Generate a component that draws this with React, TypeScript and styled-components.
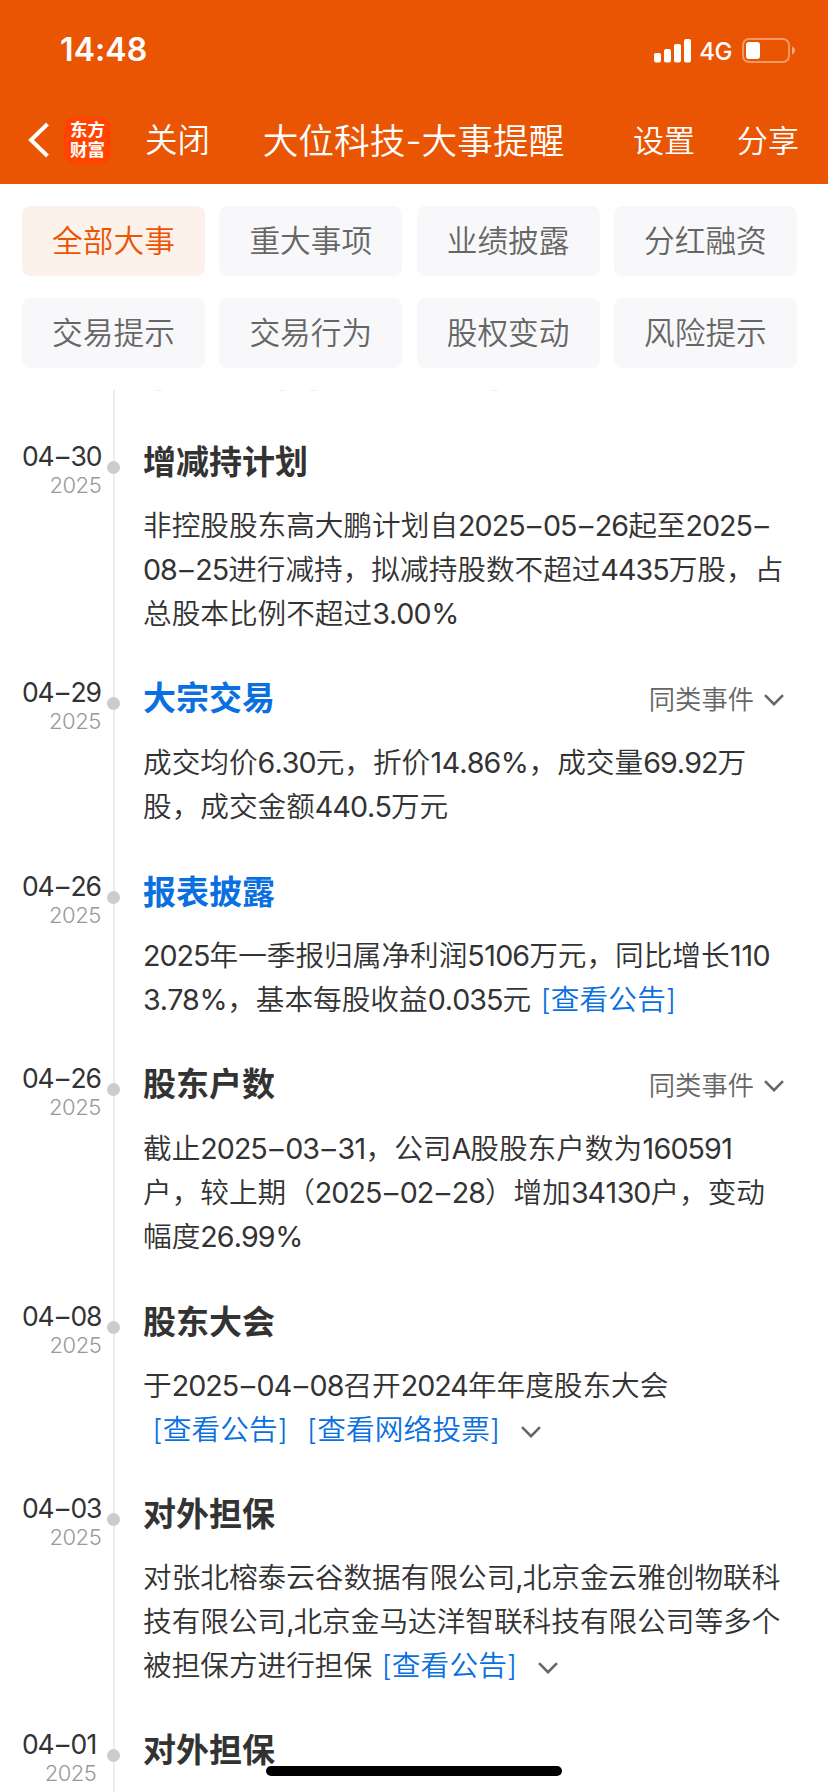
import React from "react";
import styled, { createGlobalStyle } from "styled-components";

const GlobalStyle = createGlobalStyle`
  *, *::before, *::after { box-sizing: border-box; }
  body {
    margin: 0;
    background: #fff;
    color: #333;
    font-family: Inter, "Noto Sans CJK SC", sans-serif;
    font-weight: 350;
    overflow: hidden;
  }
`;

const Screen = styled.div`
  width: 828px;
  height: 1792px;
  display: flex;
  flex-direction: column;
  background: #fff;
  overflow: hidden;
  position: relative;
`;

const Header = styled.header`
  height: 184px;
  flex: none;
  background: #ea5504;
  color: #fff;
`;

const StatusBar = styled.div`
  height: 96px;
  padding: 2px 32px 0 60px;
  display: flex;
  align-items: center;
  justify-content: space-between;
`;

const Clock = styled.span`
  font-size: 32px;
  font-weight: 600;
  line-height: 40px;
  padding-top: 2px;
  letter-spacing: 0.1px;
`;

const StatusIcons = styled.div`
  display: flex;
  align-items: center;
  padding-top: 3px;
`;

const Network = styled.span`
  font-size: 24px;
  font-weight: 500;
  line-height: 30px;
  margin: 2px 10px 0 7px;
  letter-spacing: -0.5px;
`;

const NavBar = styled.nav`
  height: 88px;
  padding: 0 29px 0 28px;
  display: grid;
  grid-template-columns: 1fr auto 1fr;
  align-items: center;
`;

const NavSide = styled.div<{ $end?: boolean }>`
  display: flex;
  align-items: center;
  justify-content: ${(p) => (p.$end ? "flex-end" : "flex-start")};
  gap: ${(p) => (p.$end ? "42px" : "0")};
`;

const NavText = styled.span<{ $size: number }>`
  font-size: ${(p) => p.$size}px;
  line-height: 48px;
  padding-top: 1px;
  white-space: nowrap;
`;

const Logo = styled.div`
  width: 47px;
  height: 47px;
  margin: 0 34px 0 15px;
  border-radius: 10px;
  background: #ff4400;
  display: flex;
  flex-direction: column;
  align-items: center;
  justify-content: center;
  font-size: 17.5px;
  font-weight: 700;
  line-height: 20px;
`;

const Tabs = styled.div`
  flex: none;
  height: 206px;
  padding: 22px 31px 22px 22px;
  display: grid;
  grid-template-columns: repeat(4, 183px);
  grid-auto-rows: 70px;
  column-gap: 14.3px;
  row-gap: 22px;
`;

const Tab = styled.button<{ $active?: boolean }>`
  border: 0;
  padding: 0;
  border-radius: 8px;
  background: ${(p) => (p.$active ? "#fdf1eb" : "#f8f8fa")};
  color: ${(p) => (p.$active ? "#ea5504" : "#666")};
  font-family: inherit;
  font-weight: inherit;
  font-size: 30.7px;
  line-height: 70px;
`;

/* The list is scrolled: a sliver of the previous entry's link shows at the top edge. */
const Timeline = styled.main`
  flex: 1;
  min-height: 0;
  padding-top: 44px;
  background:
    linear-gradient(#e6f1fc, #e6f1fc) 155px 0 / 7px 1px no-repeat,
    linear-gradient(#e6f1fc, #e6f1fc) 279px 0 / 7px 1px no-repeat,
    linear-gradient(#e6f1fc, #e6f1fc) 310px 0 / 7px 1px no-repeat,
    linear-gradient(#e6f1fc, #e6f1fc) 491px 0 / 7px 1px no-repeat,
    linear-gradient(#ededed, #ededed) 113px 0 / 2px 100% no-repeat;
`;

const Entry = styled.article<{ $height: number }>`
  height: ${(p) => p.$height}px;
  padding-left: 22px;
  display: flex;
  align-items: flex-start;
`;

const When = styled.div`
  width: 85px;
  flex: none;
  display: flex;
`;

const DateBlock = styled.div`
  text-align: right;
  white-space: nowrap;
`;

const Day = styled.div`
  font-size: 26.5px;
  line-height: 32px;
  padding-top: 6px;

  && > span { letter-spacing: -1.2px; }
`;

const Year = styled.div`
  font-size: 22px;
  line-height: 26px;
  color: #999;
  letter-spacing: -0.5px;
`;

const Dot = styled.i`
  width: 13px;
  height: 13px;
  flex: none;
  margin-top: 27px;
  border-radius: 50%;
  background: #ccc;
`;

const Content = styled.section`
  flex: 1;
  margin-left: 23px;
`;

const TitleRow = styled.div`
  height: 56px;
  padding-right: 44px;
  display: flex;
  align-items: center;
  justify-content: space-between;
`;

const Title = styled.h2<{ $link?: boolean }>`
  margin: 0;
  font-size: 33px;
  font-weight: 700;
  line-height: 56px;
  color: ${(p) => (p.$link ? "#0a6fe0" : "#333")};
`;

const Similar = styled.span`
  display: flex;
  align-items: center;
  gap: 10px;
  font-size: 26.3px;
  color: #666;

  span { padding-bottom: 2px; }
  svg { margin-top: 3px; }
`;

const Line = styled.div`
  height: 44px;
  line-height: 44px;
  font-size: 28.65px;
  white-space: pre;
`;

const Body = styled.div<{ $offset: number }>`
  padding-top: ${(p) => p.$offset}px;
`;

const Latin = styled.span<{ $room: number }>`
  font-weight: 370;
  letter-spacing: -0.97px;
  padding: 0 ${(p) => p.$room}px;
`;

const Link = styled.a`
  color: #0a6fe0;
  padding: 0 1.5px;
  letter-spacing: 0.15px;
`;

const ChevronIcon = styled.svg<{ $inline?: boolean }>`
  width: 20px;
  height: 12px;
  fill: none;
  stroke: #666;
  stroke-width: 2.6;
  margin-left: ${(p) => (p.$inline ? "19px" : "0")};
  vertical-align: ${(p) => (p.$inline ? "2px" : "0")};
`;

const HomeBar = styled.div`
  position: absolute;
  left: 266px;
  bottom: 16px;
  width: 296px;
  height: 10px;
  border-radius: 5px;
  background: #000;
`;

const Chevron = ({ inline }: { inline?: boolean }) => (
  <ChevronIcon $inline={inline} viewBox="0 0 20 12">
    <path d="M1 1.2 10 10.2 19 1.2" />
  </ChevronIcon>
);

/* Extra room on each side of the narrow glyphs. */
const ROOM: Record<string, number> = { "–": 2.5, ".": 0.1, "%": 0.6, "1": 0.4 };

/* Digits and western punctuation are set tighter than the Chinese text around them. */
const Mixed = ({ text }: { text: string }) => (
  <>
    {text.split(/([02-9A-Za-z,]+|[1.%–])/).map((part, i) =>
      i % 2 ? <Latin key={i} $room={ROOM[part] ?? 0}>{part}</Latin> : part
    )}
  </>
);

type Piece = string | { link: string } | { chevron: true };

interface Item {
  day: string;
  title: string;
  height: number;
  link?: boolean;
  similar?: boolean;
  lines: Piece[][];
}

const tabs = ["全部大事", "重大事项", "业绩披露", "分红融资", "交易提示", "交易行为", "股权变动", "风险提示"];

const items: Item[] = [
  {
    day: "04–30",
    title: "增减持计划",
    height: 236,
    lines: [
      ["非控股股东高大鹏计划自2025–05–26起至2025–"],
      ["08–25进行减持，拟减持股数不超过4435万股，占"],
      ["总股本比例不超过3.00%"],
    ],
  },
  {
    day: "04–29",
    title: "大宗交易",
    height: 194,
    link: true,
    similar: true,
    lines: [["成交均价6.30元，折价14.86%，成交量69.92万"], ["股，成交金额440.5万元"]],
  },
  {
    day: "04–26",
    title: "报表披露",
    height: 192,
    link: true,
    lines: [
      ["2025年一季报归属净利润5106万元，同比增长110"],
      ["3.78%，基本每股收益0.035元 ", { link: "[查看公告]" }],
    ],
  },
  {
    day: "04–26",
    title: "股东户数",
    height: 238,
    similar: true,
    lines: [
      ["截止2025–03–31，公司A股股东户数为160591"],
      ["户，较上期（2025–02–28）增加34130户，变动"],
      ["幅度26.99%"],
    ],
  },
  {
    day: "04–08",
    title: "股东大会",
    height: 192,
    lines: [
      ["于2025–04–08召开2024年年度股东大会"],
      [" ", { link: "[查看公告]" }, "  ", { link: "[查看网络投票]" }, { chevron: true }],
    ],
  },
  {
    day: "04–03",
    title: "对外担保",
    height: 236,
    lines: [
      ["对张北榕泰云谷数据有限公司,北京金云雅创物联科"],
      ["技有限公司,北京金马达洋智联科技有限公司等多个"],
      ["被担保方进行担保 ", { link: "[查看公告]" }, { chevron: true }],
    ],
  },
  { day: "04–01", title: "对外担保", height: 70, lines: [] },
];

const PieceView = ({ piece }: { piece: Piece }) => {
  if (typeof piece === "string") return <Mixed text={piece} />;
  if ("link" in piece) return <Link>{piece.link}</Link>;
  return <Chevron inline />;
};

export default function App() {
  return (
    <Screen>
      <GlobalStyle />
      <Header>
        <StatusBar>
          <Clock>14:48</Clock>
          <StatusIcons>
            <svg width="38" height="24" viewBox="0 0 38 24" fill="#fff">
              <rect x="0" y="14" width="7" height="9.5" rx="2" />
              <rect x="10" y="10" width="7" height="13.5" rx="2" />
              <rect x="20" y="5" width="7" height="18.5" rx="2" />
              <rect x="30" y="0" width="7" height="23.5" rx="2" />
            </svg>
            <Network>4G</Network>
            <svg width="54" height="26" viewBox="0 0 54 26">
              <rect x="1" y="1" width="46" height="23" rx="6" fill="none" stroke="#fff" strokeOpacity="0.4" strokeWidth="2" />
              <rect x="4" y="4" width="14" height="17" rx="3" fill="#fff" />
              <path d="M50 8.5c4 1.5 4 6.5 0 8z" fill="#fff" fillOpacity="0.5" />
            </svg>
          </StatusIcons>
        </StatusBar>
        <NavBar>
          <NavSide>
            <svg width="21" height="36" viewBox="0 0 21 36" fill="none" stroke="#fff" strokeWidth="4">
              <path d="M19.5 2 3 18l16.5 16" />
            </svg>
            <Logo>
              <span>东方</span>
              <span>财富</span>
            </Logo>
            <NavText $size={32.5}>关闭</NavText>
          </NavSide>
          <NavText $size={35.7}>大位科技-大事提醒</NavText>
          <NavSide $end>
            <NavText $size={31}>设置</NavText>
            <NavText $size={31}>分享</NavText>
          </NavSide>
        </NavBar>
      </Header>
      <Tabs>
        {tabs.map((name, i) => (
          <Tab key={name} $active={i === 0}>{name}</Tab>
        ))}
      </Tabs>
      <Timeline>
        {items.map((item) => (
          <Entry key={item.day + item.title} $height={item.height}>
            <When>
              <DateBlock>
                <Day><Mixed text={item.day} /></Day>
                <Year>2025</Year>
              </DateBlock>
            </When>
            <Dot />
            <Content>
              <TitleRow>
                <Title $link={item.link}>{item.title}</Title>
                {item.similar && (
                  <Similar>
                    <span>同类事件</span>
                    <Chevron />
                  </Similar>
                )}
              </TitleRow>
              <Body $offset={item.similar ? 15 : 14}>
                {item.lines.map((line, i) => (
                  <Line key={i}>
                    {line.map((piece, j) => (
                      <PieceView key={j} piece={piece} />
                    ))}
                  </Line>
                ))}
              </Body>
            </Content>
          </Entry>
        ))}
      </Timeline>
      <HomeBar />
    </Screen>
  );
}
